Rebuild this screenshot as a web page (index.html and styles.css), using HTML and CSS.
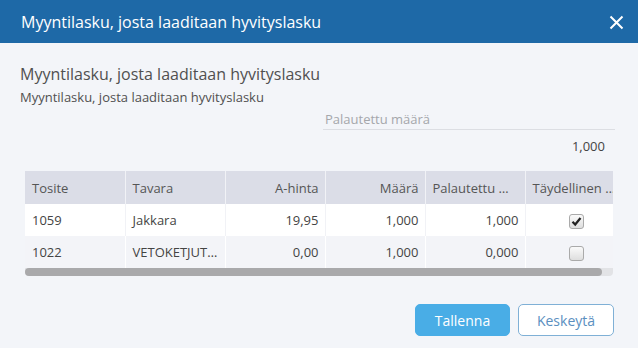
FILE: index.html
```html
<!DOCTYPE html>
<html>

<head>
	<title>Myyntilasku, josta laaditaan hyvityslasku</title>
	<link rel="stylesheet" href="styles.css">
</head>

<body>
	<div class="dialog">
		<div class="dialog-header">
			<span class="dialog-title">Myyntilasku, josta laaditaan hyvityslasku</span>
			<span class="close-btn">
				<svg width="15" height="15" viewBox="0 0 15 15">
					<path d="M1.5 1.5 L13.5 13.5 M13.5 1.5 L1.5 13.5" stroke="#fff" stroke-width="2" fill="none" />
				</svg>
			</span>
		</div>

		<div class="dialog-body">
			<h2 class="heading">Myyntilasku, josta laaditaan hyvityslasku</h2>
			<p class="subheading">Myyntilasku, josta laaditaan hyvityslasku</p>

			<div class="field">
				<div class="field-label">Palautettu määrä</div>
				<div class="field-value">1,000</div>
			</div>

			<div class="grid">
				<div class="grid-scroll">
					<table>
						<colgroup>
							<col class="col">
							<col class="col">
							<col class="col">
							<col class="col">
							<col class="col">
							<col class="col">
						</colgroup>
						<thead>
							<tr>
								<th>Tosite</th>
								<th>Tavara</th>
								<th class="num">A-hinta</th>
								<th class="num">Määrä</th>
								<th class="num">Palautettu määrä</th>
								<th>Täydellinen palautus</th>
							</tr>
						</thead>
						<tbody>
							<tr>
								<td>1059</td>
								<td>Jakkara</td>
								<td class="num">19,95</td>
								<td class="num">1,000</td>
								<td class="num">1,000</td>
								<td class="check"><span class="checkbox checked">
									<svg width="11" height="11" viewBox="0 0 11 11">
										<path d="M1.5 5.8 L4.2 8.5 L9.5 2" stroke="#222" stroke-width="2.2" fill="none" />
									</svg>
								</span></td>
							</tr>
							<tr class="alt">
								<td>1022</td>
								<td>VETOKETJUT 20 cm</td>
								<td class="num">0,00</td>
								<td class="num">1,000</td>
								<td class="num">0,000</td>
								<td class="check"><span class="checkbox"></span></td>
							</tr>
						</tbody>
					</table>
				</div>
				<div class="scrollbar">
					<div class="scrollbar-thumb"></div>
				</div>
			</div>

			<div class="dialog-footer">
				<button class="btn btn-primary">Tallenna</button>
				<button class="btn btn-secondary">Keskeytä</button>
			</div>
		</div>
	</div>
</body>

</html>
```

FILE: styles.css
```css
body {
	margin: 0;
	font-family: "Open Sans", Arial, sans-serif;
	background-color: #f3f5f9;
}

.dialog {
	width: 638px;
	height: 348px;
	display: flex;
	flex-direction: column;
	background-color: #f3f5f9;
}

.dialog-header {
	height: 43px;
	background-color: #1e69a7;
	display: flex;
	align-items: center;
	justify-content: space-between;
	padding: 0 14px 0 21px;
}

.dialog-title {
	color: #fff;
	font-size: 16px;
}

.close-btn {
	display: flex;
	margin-top: 1px;
}

.dialog-body {
	flex: 1;
	display: flex;
	flex-direction: column;
	padding: 21px 24px 12px 20px;
}

.heading {
	margin: 0;
	font-size: 16px;
	font-weight: normal;
	line-height: 20px;
	color: #505050;
}

.subheading {
	margin: 4px 0 0 0;
	font-size: 13px;
	line-height: 18px;
	color: #505050;
}

.field {
	width: 292px;
	align-self: flex-end;
	margin-right: -1px;
	margin-top: 4px;
}

.field-label {
	font-size: 13px;
	line-height: 18px;
	color: #a5a7ab;
	padding: 0 2px 1px;
	border-bottom: 1px solid #dcdee3;
}

.field-value {
	font-size: 13px;
	line-height: 18px;
	color: #444;
	text-align: right;
	padding: 7px 10px 0 0;
}

.grid {
	width: 588px;
	margin: 16px 0 0 5px;
}

.grid-scroll {
	width: 588px;
	overflow: hidden;
}

table {
	table-layout: fixed;
	width: 600px;
	border-collapse: collapse;
	font-size: 13px;
	color: #444;
}

.col {
	width: 100px;
}

th,
td {
	padding: 0 6px 0 7px;
	white-space: nowrap;
	overflow: hidden;
	text-overflow: ellipsis;
	text-align: left;
	font-weight: normal;
}

th {
	height: 33px;
	background-color: #dbdde7;
	color: #555;
	border-left: 1px solid #f1f2f6;
}

th:first-child {
	border-left: none;
}

td {
	height: 32px;
	background-color: #fff;
	border-left: 1px solid #f1f2f6;
}

td:first-child {
	border-left: none;
}

tr.alt td {
	background-color: #f3f4f8;
	border-left-color: #fff;
}

.num {
	text-align: right;
}

.check {
	text-align: center;
	padding: 0 0 0 2px;
}

.checkbox {
	display: inline-flex;
	align-items: center;
	justify-content: center;
	width: 13px;
	height: 13px;
	border: 1px solid #aaa;
	border-radius: 3px;
	background: linear-gradient(#fafafa, #dedede);
	vertical-align: middle;
}

.scrollbar {
	height: 8px;
	background-color: #e2e3e6;
	border-radius: 0 0 4px 4px;
}

.scrollbar-thumb {
	width: 577px;
	height: 8px;
	background-color: #a9a9ab;
	border-radius: 4px;
}

.dialog-footer {
	margin-top: auto;
	display: flex;
	justify-content: flex-end;
	gap: 8px;
}

.btn {
	height: 32px;
	font-family: "Open Sans", Arial, sans-serif;
	font-size: 14px;
	border-radius: 5px;
	cursor: pointer;
}

.btn-primary {
	width: 95px;
	background-color: #49ade6;
	border: 1px solid #49ade6;
	color: #fff;
}

.btn-secondary {
	width: 96px;
	background-color: #fff;
	border: 1px solid #7fb0d6;
	color: #5b8fbf;
}
```
